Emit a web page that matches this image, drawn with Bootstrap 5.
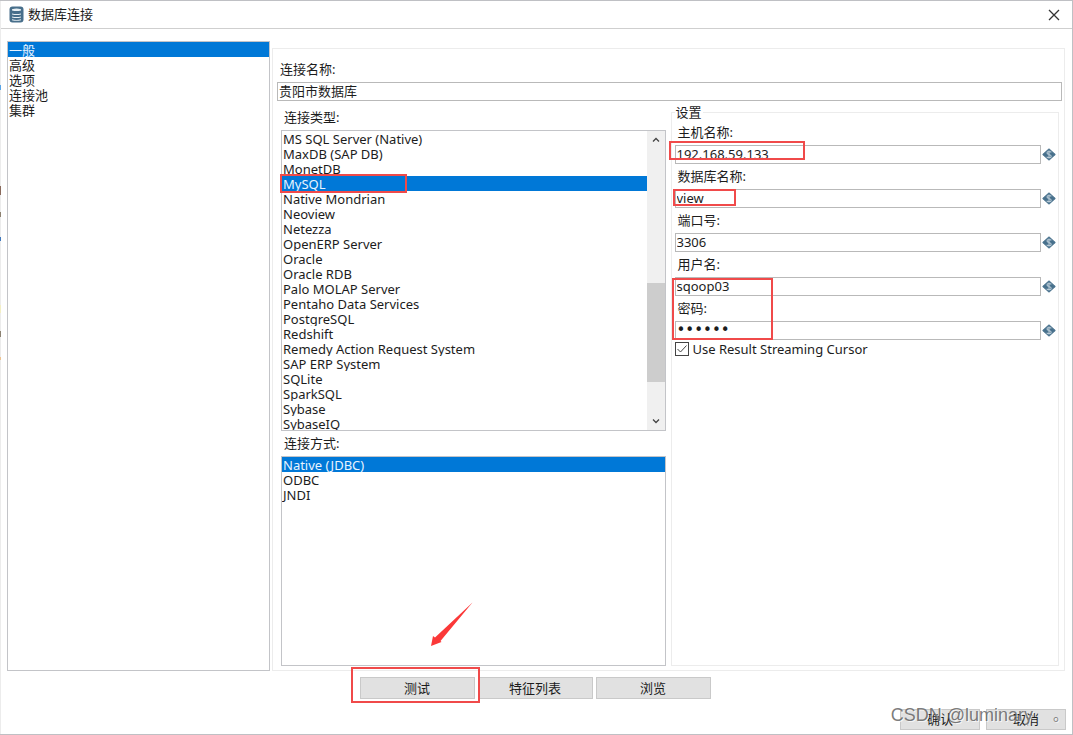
<!DOCTYPE html>
<html lang="zh-CN">
<head>
<meta charset="utf-8">
<meta name="viewport" content="width=device-width, initial-scale=1">
<title>数据库连接</title>
<link href="https://cdn.jsdelivr.net/npm/bootstrap@5.3.0/dist/css/bootstrap.min.css" rel="stylesheet">
<style>
  :root { --line: #c3c4c8; --faint: #ececec; --accent: #0078d7; --mark: #f04a4a; }
  body { font: 13px/15px "Noto Sans", "Noto Sans CJK SC", sans-serif; color: #1c1c1c; background: #fff; }
  .window { min-height: 100vh; border: 1px solid #bfc0c4; border-width: 1px 1px 1px 0; }
  .edge { left: 0; top: 0; bottom: 0; width: 1px; background: linear-gradient(#ececec 0 84px, #58a5e8 84px 89px, #ececec 89px 185px, #8a6a5c 185px 194px, #ececec 194px 211px, #8d8170 211px 216px, #ececec 216px 236px, #3f78bd 236px 240px, #ececec 240px 304px, #f3efc4 304px 312px, #ececec 312px 330px, #8c8272 330px 336px, #ececec 336px 356px, #eec391 356px 359px, #ececec 359px); }
  .titlebar { height: 28px; border-bottom: 1px solid #cfcfcf; padding: 0 10px 0 9px; }
  .close-btn { width: 16px; height: 16px; }
  .work { padding: 12px 7px 0 7px; }
  .box { border: 1px solid var(--line); --bs-list-group-border-radius: 0; overflow: hidden; background: #fff; }
  .nav-list { flex: 0 0 263px; }
  .box .list-group-item { border: 0; padding: 0 1px; line-height: 17px; color: inherit; height: 15px; white-space: nowrap; flex: none; }
  .box .list-group-item.active { background: var(--accent); color: #e8f4ff; margin: 0; }
  .panel { border: 1px solid var(--faint); margin: 7px 0 0 2px; padding: 8px 2px 4px 4px; min-width: 0; }
  .caption { display: block; line-height: 25px; padding-left: 3px; }
  .field { height: 19px; padding: 0 1px 2px; border: 1px solid #b9b9b9; border-radius: 0; font-size: 13px; line-height: 15px; min-height: 0; color: inherit; }
  .secret-field { font: 15px/15px "DejaVu Sans", sans-serif; padding-bottom: 1px; }
  .columns { gap: 5px; margin: 3px 3px 0 4px; }
  .types { flex: 1 1 384px; min-width: 0; padding-top: 1px; }
  .settings { flex: 1 1 388px; min-width: 0; border: 1px solid var(--faint); padding: 0 2px 0 3px; }
  .settings legend { float: none; width: auto; font-size: 13px; line-height: 16px; margin: 0; padding: 0 1px; }
  .db-list { height: 301px; }
  .rail { width: 18px; background: #f0f0f0; flex: none; }
  .rail .arrow-btn { height: 18px; }
  .rail .thumb { height: 99px; background: #cdcdcd; }
  .rail .above { flex: 135 1 0; }
  .rail .below { flex: 30 1 0; }
  .with-var { gap: 1px; }
  .with-var svg { flex: none; }
  .option-row { gap: 4px; padding-top: 2px; line-height: 14px; }
  .tick { appearance: none; width: 14px; height: 14px; margin: 0; border: 1px solid #444; background: #fff; }
  .tick:checked { background: url("data:image/svg+xml,%3Csvg xmlns='http://www.w3.org/2000/svg' viewBox='0 0 12 12'%3E%3Cpath d='M1.5 6l3 3 6-6.500' fill='none' stroke='%23444'/%3E%3C/svg%3E") center / 12px; }
  .flat { height: 22px; padding: 0; border: 1px solid #c9c9c9; border-radius: 0; background: #e1e1e1; font-size: 13px; line-height: 20px; color: inherit; }
  .actions { gap: 3px; padding: 6px 2px 0 0; }
  .actions .flat { width: 115px; }
  .footer-row { gap: 6px; padding: 10px 6px 4px; }
  .footer-row .flat { width: 80px; height: 21px; line-height: 19px; }
  .mark-box { position: absolute; border: 2px solid var(--mark); pointer-events: none; z-index: 2; }
  .mark-type { left: -1px; top: 44px; width: 127px; height: 19px; }
  .mark-host { left: -6px; top: -4px; width: 136px; height: 19px; }
  .mark-db { left: -2px; top: 0; width: 63px; height: 17px; }
  .mark-login { left: -3px; top: 1px; width: 101px; height: 62px; }
  .mark-test { left: -9px; top: -10px; width: 129px; height: 36px; }
  .pointer { right: 192px; bottom: 18px; z-index: 2; }
  .watermark { right: 4px; bottom: 8px; gap: 20px; font: 18px/22px "Liberation Sans", "Noto Sans CJK SC", sans-serif; color: rgba(90,90,90,.8); text-shadow: 1px 1px 0 rgba(255,255,255,.7); pointer-events: none; white-space: nowrap; }
  .watermark .stop { font-size: 15px; }
</style>
</head>
<body>
<svg class="d-none" aria-hidden="true">
  <symbol id="variable" viewBox="0 0 14 13">
    <path d="M7 .8L13.300 6.500 7 12.200 .7 6.500z" fill="#47708c" stroke="#47708c" stroke-linejoin="round" stroke-width="1"/>
    <path d="M9.300 4.300C8.500 3.300 5 3 5 4.900S9.200 6.200 9.200 8.200 5.500 9.900 4.700 8.700M7 2.500v8" fill="none" stroke="#b9cad6" stroke-width="1.100"/>
  </symbol>
</svg>
<div class="window position-relative d-flex flex-column">
  <div class="edge position-absolute"></div>
  <header class="titlebar d-flex align-items-center">
    <svg width="15" height="17" viewBox="0 0 15 17" aria-hidden="true">
      <rect x=".5" y=".5" width="14" height="16" rx="3" fill="#486f8b"/>
      <path d="M3 3.200q4.500-1.200 9 0v1.200q-4.500 1.200-9 0zM3 7.500q4.500 1.200 9 0v1q-4.500 1.200-9 0zM3 10.500q4.500 1.200 9 0v1q-4.500 1.200-9 0zM3 13.300q4.500 1.200 9 0v.9q-4.500 1.200-9 0z" fill="#e9f0f4"/>
    </svg>
    <span class="ms-1">数据库连接</span>
    <button type="button" class="close-btn btn p-0 border-0 ms-auto d-flex align-items-center justify-content-center" aria-label="关闭">
      <svg width="12" height="12" viewBox="0 0 12 12"><path d="M1 1l10 10M11 1L1 11" stroke="#333" stroke-width="1.300"/></svg>
    </button>
  </header>

  <main class="work d-flex flex-grow-1">
    <nav class="nav-list box list-group">
      <button type="button" class="list-group-item list-group-item-action active">一般</button>
      <button type="button" class="list-group-item list-group-item-action">高级</button>
      <button type="button" class="list-group-item list-group-item-action">选项</button>
      <button type="button" class="list-group-item list-group-item-action">连接池</button>
      <button type="button" class="list-group-item list-group-item-action">集群</button>
    </nav>

    <section class="panel d-flex flex-column flex-grow-1">
      <label class="caption" for="connName">连接名称:</label>
      <input id="connName" class="field form-control" type="text" value="贵阳市数据库">
      <div class="columns d-flex flex-grow-1">
        <div class="types d-flex flex-column">
          <span class="caption">连接类型:</span>
          <div class="position-relative">
            <div class="db-list box d-flex">
              <div class="list-group flex-grow-1 rounded-0">
                <button type="button" class="list-group-item list-group-item-action">MS SQL Server (Native)</button>
                <button type="button" class="list-group-item list-group-item-action">MaxDB (SAP DB)</button>
                <button type="button" class="list-group-item list-group-item-action">MonetDB</button>
                <button type="button" class="list-group-item list-group-item-action active">MySQL</button>
                <button type="button" class="list-group-item list-group-item-action">Native Mondrian</button>
                <button type="button" class="list-group-item list-group-item-action">Neoview</button>
                <button type="button" class="list-group-item list-group-item-action">Netezza</button>
                <button type="button" class="list-group-item list-group-item-action">OpenERP Server</button>
                <button type="button" class="list-group-item list-group-item-action">Oracle</button>
                <button type="button" class="list-group-item list-group-item-action">Oracle RDB</button>
                <button type="button" class="list-group-item list-group-item-action">Palo MOLAP Server</button>
                <button type="button" class="list-group-item list-group-item-action">Pentaho Data Services</button>
                <button type="button" class="list-group-item list-group-item-action">PostgreSQL</button>
                <button type="button" class="list-group-item list-group-item-action">Redshift</button>
                <button type="button" class="list-group-item list-group-item-action">Remedy Action Request System</button>
                <button type="button" class="list-group-item list-group-item-action">SAP ERP System</button>
                <button type="button" class="list-group-item list-group-item-action">SQLite</button>
                <button type="button" class="list-group-item list-group-item-action">SparkSQL</button>
                <button type="button" class="list-group-item list-group-item-action">Sybase</button>
                <button type="button" class="list-group-item list-group-item-action">SybaseIQ</button>
              </div>
              <div class="rail d-flex flex-column">
                <button type="button" class="arrow-btn btn p-0 border-0 d-flex align-items-center justify-content-center" aria-label="向上"><svg width="8" height="6" viewBox="0 0 8 6"><path d="M1 4.500l3-3 3 3" fill="none" stroke="#444" stroke-width="1.300"/></svg></button>
                <div class="above"></div>
                <div class="thumb"></div>
                <div class="below"></div>
                <button type="button" class="arrow-btn btn p-0 border-0 d-flex align-items-center justify-content-center" aria-label="向下"><svg width="8" height="6" viewBox="0 0 8 6"><path d="M1 1.500l3 3 3-3" fill="none" stroke="#444" stroke-width="1.300"/></svg></button>
              </div>
            </div>
            <span class="mark-box mark-type"></span>
          </div>
          <span class="caption">连接方式:</span>
          <div class="box list-group flex-grow-1 position-relative">
            <button type="button" class="list-group-item list-group-item-action active">Native (JDBC)</button>
            <button type="button" class="list-group-item list-group-item-action">ODBC</button>
            <button type="button" class="list-group-item list-group-item-action">JNDI</button>
            <svg class="pointer position-absolute" width="42" height="45" viewBox="0 0 42 45" aria-hidden="true"><path d="M41.500 .5L9.500 39 10.500 40 0 44 2 34 4 35.500z" fill="#fb3838"/></svg>
          </div>
        </div>

        <fieldset class="settings">
          <legend>设置</legend>
          <label class="caption" for="host">主机名称:</label>
          <div class="with-var d-flex align-items-center position-relative">
            <input id="host" class="field form-control" type="text" value="192.168.59.133">
            <svg width="14" height="13"><use href="#variable"/></svg>
            <span class="mark-box mark-host"></span>
          </div>
          <label class="caption" for="dbName">数据库名称:</label>
          <div class="with-var d-flex align-items-center position-relative">
            <input id="dbName" class="field form-control" type="text" value="view">
            <svg width="14" height="13"><use href="#variable"/></svg>
            <span class="mark-box mark-db"></span>
          </div>
          <label class="caption" for="port">端口号:</label>
          <div class="with-var d-flex align-items-center">
            <input id="port" class="field form-control" type="text" value="3306">
            <svg width="14" height="13"><use href="#variable"/></svg>
          </div>
          <label class="caption" for="user">用户名:</label>
          <div class="with-var d-flex align-items-center position-relative">
            <input id="user" class="field form-control" type="text" value="sqoop03">
            <svg width="14" height="13"><use href="#variable"/></svg>
            <span class="mark-box mark-login"></span>
          </div>
          <label class="caption" for="pass">密码:</label>
          <div class="with-var d-flex align-items-center">
            <input id="pass" class="field secret-field form-control" type="password" value="secret">
            <svg width="14" height="13"><use href="#variable"/></svg>
          </div>
          <div class="option-row d-flex align-items-center">
            <input id="cursor" class="tick" type="checkbox" checked>
            <label for="cursor">Use Result Streaming Cursor</label>
          </div>
        </fieldset>
      </div>
    </section>
  </main>

  <div class="actions d-flex justify-content-center">
    <div class="position-relative">
      <button type="button" class="flat btn">测试</button>
      <span class="mark-box mark-test"></span>
    </div>
    <button type="button" class="flat btn">特征列表</button>
    <button type="button" class="flat btn">浏览</button>
  </div>
  <footer class="footer-row d-flex justify-content-end position-relative">
    <button type="button" class="flat btn">确认</button>
    <button type="button" class="flat btn">取消</button>
    <span class="watermark position-absolute d-flex"><span>CSDN @luminary</span><span class="stop">。</span></span>
  </footer>
</div>
<script src="https://cdn.jsdelivr.net/npm/bootstrap@5.3.0/dist/js/bootstrap.bundle.min.js"></script>
</body>
</html>
